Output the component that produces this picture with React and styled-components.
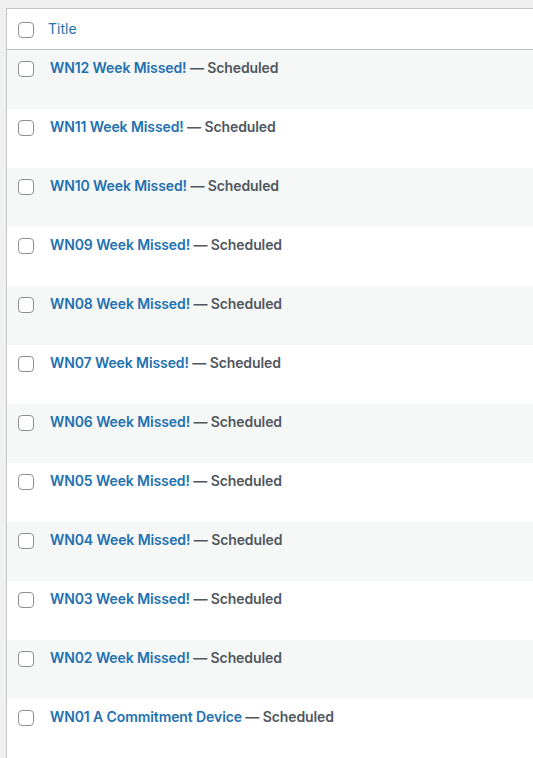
import React from "react";
import styled, { createGlobalStyle } from "styled-components";

const GlobalStyle = createGlobalStyle`
    html, body {
        margin: 0;
        padding: 0;
        background: #f0f0f1;
        overflow: hidden;
    }
    body {
        font-family: Inter, "Open Sans", "Liberation Sans", sans-serif;
        -webkit-font-smoothing: antialiased;
    }
`;

const posts = [
    "WN12 Week Missed!",
    "WN11 Week Missed!",
    "WN10 Week Missed!",
    "WN09 Week Missed!",
    "WN08 Week Missed!",
    "WN07 Week Missed!",
    "WN06 Week Missed!",
    "WN05 Week Missed!",
    "WN04 Week Missed!",
    "WN03 Week Missed!",
    "WN02 Week Missed!",
    "WN01 A Commitment Device",
];

const App = () => {
    return (
        <>
            <GlobalStyle />
            <Page>
                <Table>
                    <thead>
                        <tr>
                            <CheckCell as="th" header>
                                <Checkbox type="checkbox" />
                            </CheckCell>
                            <HeadCell>
                                <HeadLink href="#">Title</HeadLink>
                            </HeadCell>
                        </tr>
                    </thead>
                    <tbody>
                        {posts.map((title, i) => (
                            <Row key={title} striped={i % 2 === 0}>
                                <CheckCell>
                                    <Checkbox type="checkbox" />
                                </CheckCell>
                                <TitleCell>
                                    <RowTitle href="#">{title}</RowTitle>
                                    <State> — Scheduled</State>
                                </TitleCell>
                            </Row>
                        ))}
                    </tbody>
                </Table>
            </Page>
        </>
    );
};

export default App;

const Page = styled.div`
    padding: 8px 0 0 6px;
    width: 100vw;
    box-sizing: border-box;
    overflow: hidden;
`;

const Table = styled.table`
    width: calc(100% + 8px);
    border-collapse: separate;
    border-spacing: 0;
    background: #fff;
    border: 1px solid #c3c4c7;
    table-layout: fixed;
`;

const CheckCell = styled.td`
    width: 33px;
    box-sizing: border-box;
    padding: ${({ header }) => (header ? "13px 0 0 11px" : "11px 0 0 11px")};
    vertical-align: top;
    height: ${({ header }) => (header ? "41px" : "59px")};
    border-bottom: ${({ header }) => (header ? "1px solid #c3c4c7" : "none")};
`;

const HeadCell = styled.th`
    text-align: left;
    padding: 0 8px 2px;
    height: 41px;
    box-sizing: border-box;
    font-weight: 400;
    font-size: 14px;
    border-bottom: 1px solid #c3c4c7;
`;

const HeadLink = styled.a`
    color: #2271b1;
    text-decoration: none;
`;

const Row = styled.tr`
    background: ${({ striped }) => (striped ? "#f6f7f7" : "#fff")};
`;

const TitleCell = styled.td`
    vertical-align: top;
    padding: 8px 10px 0;
    font-size: 14px;
    line-height: 19px;
    font-weight: 600;
    letter-spacing: -0.1px;
    color: #50575e;
    white-space: nowrap;
`;

const RowTitle = styled.a`
    color: #2271b1;
    text-decoration: none;
`;

const State = styled.span`
    color: #50575e;
`;

const Checkbox = styled.input`
    appearance: none;
    display: block;
    margin: 0;
    width: 16px;
    height: 16px;
    box-sizing: border-box;
    border: 1px solid #8c8f94;
    border-radius: 4px;
    background: #fff;
`;
